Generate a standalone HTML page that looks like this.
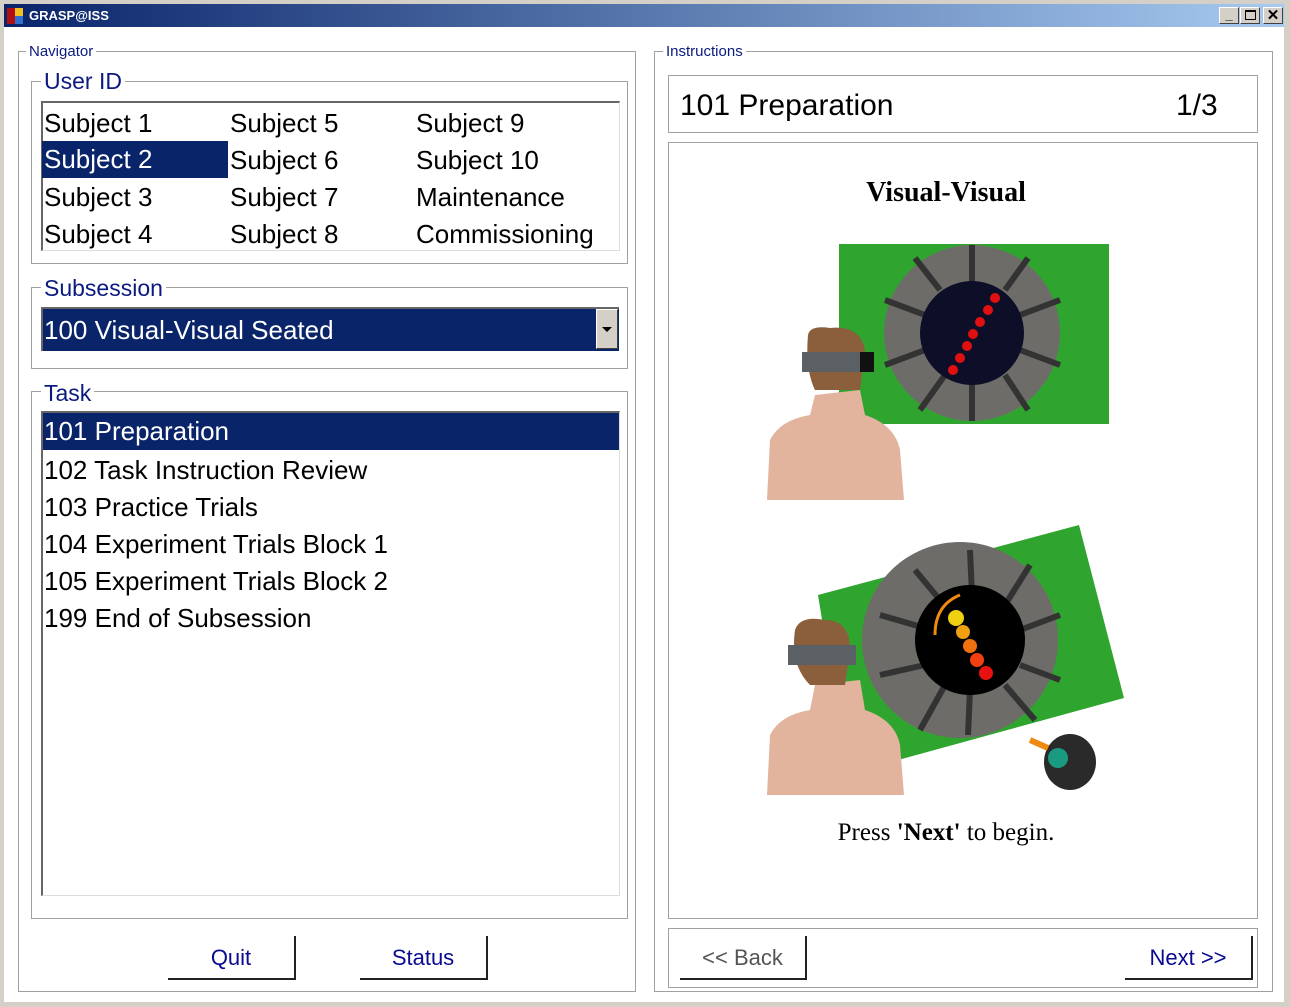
<!DOCTYPE html>
<html><head><meta charset="utf-8"><style>
*{margin:0;padding:0;box-sizing:border-box}
body{width:1290px;height:1007px;background:#d4d0c8;position:relative;overflow:hidden;font-family:"Liberation Sans",sans-serif}
.a{position:absolute}
.gb{position:absolute;border:1px solid #a0a0a0}
.lbl{position:absolute;background:#fff;color:#0a1a80;padding:0 3px;line-height:1}
.t{position:absolute;font-size:26px;line-height:37px;color:#000;white-space:nowrap}
.sel{background:#0a246a;color:#fff}
.btn{position:absolute;border-right:2px solid #222;border-bottom:2px solid #222;color:#0a0a90;font-size:22px;text-align:center;line-height:44px;background:#fff}
</style></head><body>
<div class="a" style="left:4px;top:4px;width:1280px;height:23px;background:linear-gradient(90deg,#0a246a,#a6caf0)"></div>
<div class="a" style="left:7px;top:8px;width:16px;height:16px;background:#c0c0c0">
<div class="a" style="left:0;top:0;width:8px;height:16px;background:#b01010"></div>
<div class="a" style="left:8px;top:0;width:8px;height:8px;background:#f0c020"></div>
<div class="a" style="left:8px;top:8px;width:8px;height:8px;background:#3070d0"></div></div>
<div class="a" style="left:29px;top:8px;color:#fff;font-weight:bold;font-size:13px">GRASP@ISS</div>
<div class="a" style="left:1219px;top:7px;width:20px;height:17px;background:#d4d0c8;border:1px solid;border-color:#fff #404040 #404040 #fff;font-size:13px;text-align:center;line-height:14px;font-weight:bold">_</div>
<div class="a" style="left:1240px;top:7px;width:20px;height:17px;background:#d4d0c8;border:1px solid;border-color:#fff #404040 #404040 #fff"><div class="a" style="left:4px;top:2px;width:11px;height:10px;border:1px solid #000;border-top-width:2px"></div></div>
<div class="a" style="left:1263px;top:7px;width:20px;height:17px;background:#d4d0c8;border:1px solid;border-color:#fff #404040 #404040 #fff;font-size:15px;text-align:center;line-height:15px;font-weight:bold">✕</div>
<div class="a" style="left:4px;top:27px;width:1280px;height:975px;background:#fff"></div>

<!-- Navigator -->
<div class="gb" style="left:18px;top:51px;width:618px;height:941px"></div>
<div class="lbl" style="left:26px;top:44px;font-size:15px">Navigator</div>
<div class="gb" style="left:31px;top:81px;width:597px;height:183px"></div>
<div class="lbl" style="left:41px;top:70px;font-size:23px">User ID</div>
<div class="a" style="left:41px;top:101px;width:579px;height:150px;border-top:2px solid #666;border-left:2px solid #666;border-right:1px solid #ddd;border-bottom:1px solid #ddd"></div>
<div class="t sel" style="left:42px;top:141px;width:186px;padding-left:2px">Subject 2</div>
<div class="t" style="left:44px;top:105px">Subject 1</div>
<div class="t" style="left:44px;top:179px">Subject 3</div>
<div class="t" style="left:44px;top:216px">Subject 4</div>
<div class="t" style="left:230px;top:105px">Subject 5</div>
<div class="t" style="left:230px;top:142px">Subject 6</div>
<div class="t" style="left:230px;top:179px">Subject 7</div>
<div class="t" style="left:230px;top:216px">Subject 8</div>
<div class="t" style="left:416px;top:105px">Subject 9</div>
<div class="t" style="left:416px;top:142px">Subject 10</div>
<div class="t" style="left:416px;top:179px">Maintenance</div>
<div class="t" style="left:416px;top:216px">Commissioning</div>

<div class="gb" style="left:31px;top:287px;width:597px;height:82px"></div>
<div class="lbl" style="left:41px;top:277px;font-size:23px">Subsession</div>
<div class="a" style="left:41px;top:307px;width:578px;height:44px;border-top:2px solid #666;border-left:2px solid #666;background:#0a246a"></div>
<div class="t" style="left:44px;top:312px;color:#fff">100 Visual-Visual Seated</div>
<div class="a" style="left:596px;top:309px;width:22px;height:40px;background:#d4d0c8;border:1px solid;border-color:#fff #404040 #404040 #fff"><div class="a" style="left:5px;top:17px;border-left:5px solid transparent;border-right:5px solid transparent;border-top:5px solid #000"></div></div>

<div class="gb" style="left:31px;top:391px;width:597px;height:528px"></div>
<div class="lbl" style="left:41px;top:382px;font-size:23px">Task</div>
<div class="a" style="left:41px;top:411px;width:579px;height:485px;border-top:2px solid #666;border-left:2px solid #666;border-right:1px solid #ddd;border-bottom:1px solid #ddd"></div>
<div class="t sel" style="left:43px;top:413px;width:576px;padding-left:1px">101 Preparation</div>
<div class="t" style="left:44px;top:452px">102 Task Instruction Review</div>
<div class="t" style="left:44px;top:489px">103 Practice Trials</div>
<div class="t" style="left:44px;top:526px">104 Experiment Trials Block 1</div>
<div class="t" style="left:44px;top:563px">105 Experiment Trials Block 2</div>
<div class="t" style="left:44px;top:600px">199 End of Subsession</div>

<div class="btn" style="left:168px;top:936px;width:128px;height:44px">Quit</div>
<div class="btn" style="left:360px;top:936px;width:128px;height:44px">Status</div>

<!-- Instructions -->
<div class="gb" style="left:654px;top:51px;width:619px;height:941px"></div>
<div class="lbl" style="left:663px;top:44px;font-size:15px">Instructions</div>
<div class="gb" style="left:668px;top:75px;width:590px;height:58px"></div>
<div class="a" style="left:680px;top:89px;font-size:30px">101 Preparation</div>
<div class="a" style="left:1176px;top:89px;font-size:30px">1/3</div>
<div class="gb" style="left:668px;top:142px;width:590px;height:777px"></div>
<div class="a" style="left:668px;top:177px;width:556px;text-align:center;font-family:'Liberation Serif',serif;font-weight:bold;font-size:28px">Visual-Visual</div>

<svg class="a" style="left:760px;top:240px" width="360" height="270">
<rect x="79" y="4" width="270" height="180" fill="#2fa52f"/>
<circle cx="212" cy="93" r="88" fill="#6e6c68"/>
<g stroke="#333" stroke-width="6"><line x1="212" y1="5" x2="212" y2="45"/><line x1="212" y1="140" x2="212" y2="181"/><line x1="125" y1="60" x2="165" y2="75"/><line x1="300" y1="60" x2="260" y2="75"/><line x1="125" y1="125" x2="165" y2="110"/><line x1="300" y1="125" x2="260" y2="110"/><line x1="155" y1="18" x2="180" y2="50"/><line x1="268" y1="18" x2="245" y2="50"/><line x1="160" y1="170" x2="185" y2="135"/><line x1="268" y1="170" x2="245" y2="135"/></g>
<circle cx="212" cy="93" r="52" fill="#0d0f28"/>
<g fill="#e01010"><circle cx="235" cy="58" r="5"/><circle cx="228" cy="70" r="5"/><circle cx="220" cy="82" r="5"/><circle cx="213" cy="94" r="5"/><circle cx="207" cy="106" r="5"/><circle cx="200" cy="118" r="5"/><circle cx="193" cy="130" r="5"/></g>
<path d="M7,260 L10,200 Q20,180 50,175 L55,155 L100,150 L105,175 Q135,185 140,210 L144,260 Z" fill="#e2b49e"/>
<path d="M48,95 Q50,85 70,88 Q100,85 105,110 L100,150 L55,150 Q45,130 48,95Z" fill="#8b5e3c"/>
<rect x="42" y="112" width="70" height="20" fill="#5a6064"/>
<rect x="100" y="112" width="14" height="20" fill="#111"/>
</svg>

<svg class="a" style="left:760px;top:520px" width="370" height="280">
<polygon points="58,75 319,5 364,178 87,254" fill="#2fa52f"/>
<circle cx="200" cy="120" r="98" fill="#6e6c68"/>
<g stroke="#333" stroke-width="6"><line x1="210" y1="30" x2="212" y2="75"/><line x1="210" y1="170" x2="208" y2="215"/><line x1="120" y1="95" x2="165" y2="108"/><line x1="300" y1="95" x2="260" y2="110"/><line x1="120" y1="155" x2="165" y2="145"/><line x1="300" y1="160" x2="260" y2="145"/><line x1="155" y1="50" x2="180" y2="80"/><line x1="270" y1="45" x2="245" y2="85"/><line x1="160" y1="210" x2="185" y2="165"/><line x1="275" y1="200" x2="245" y2="165"/></g>
<circle cx="210" cy="120" r="55" fill="#000"/>
<path d="M175,115 Q175,85 200,75" fill="none" stroke="#f08a10" stroke-width="3"/>
<circle cx="196" cy="98" r="8" fill="#f0d010"/><circle cx="203" cy="112" r="7" fill="#f0a010"/><circle cx="210" cy="126" r="7" fill="#f07010"/><circle cx="217" cy="140" r="7" fill="#f04010"/><circle cx="226" cy="153" r="7" fill="#e81010"/>
<path d="M7,275 L10,215 Q20,195 50,190 L55,165 L100,160 L105,190 Q135,200 140,225 L144,275 Z" fill="#e2b49e"/>
<path d="M35,110 Q40,95 65,100 Q90,100 90,130 L85,165 L50,165 Q30,145 35,110Z" fill="#8b5e3c"/>
<rect x="28" y="125" width="68" height="20" fill="#5a6064"/>
<rect x="272" y="205" width="78" height="68" fill="#fff"/>
<ellipse cx="310" cy="242" rx="26" ry="28" fill="#2a2a2a"/>
<circle cx="298" cy="238" r="10" fill="#1a9a80"/>
<path d="M270,220 L288,228" stroke="#f08a10" stroke-width="6"/>
</svg>

<div class="a" style="left:668px;top:819px;width:556px;text-align:center;font-family:'Liberation Serif',serif;font-size:25px">Press <b>'Next'</b> to begin.</div>

<div class="gb" style="left:668px;top:928px;width:590px;height:60px"></div>
<div class="btn" style="left:680px;top:936px;width:127px;height:44px;color:#555">&lt;&lt; Back</div>
<div class="btn" style="left:1125px;top:936px;width:128px;height:44px">Next &gt;&gt;</div>
</body></html>
